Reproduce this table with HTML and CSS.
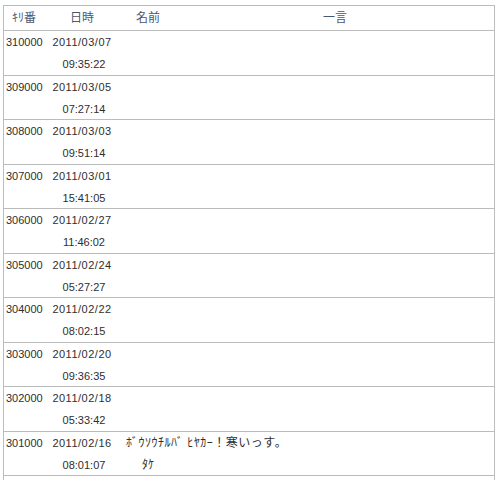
FILE: index.html
```html
<!DOCTYPE html>
<html lang="ja">
<head>
<meta charset="utf-8">
<title>キリ番</title>
<link rel="stylesheet" href="styles.css">
</head>
<body>
<div class="tbl">
  <div class="hd">
    <div class="h">ｷﾘ番</div>
    <div class="h">日時</div>
    <div class="h">名前</div>
    <div class="h">一言</div>
  </div>
  <div class="row"><div class="no">310000</div><div class="date">2011/03/07</div><div class="time">09:35:22</div></div>
  <div class="row"><div class="no">309000</div><div class="date">2011/03/05</div><div class="time">07:27:14</div></div>
  <div class="row"><div class="no">308000</div><div class="date">2011/03/03</div><div class="time">09:51:14</div></div>
  <div class="row"><div class="no">307000</div><div class="date">2011/03/01</div><div class="time">15:41:05</div></div>
  <div class="row"><div class="no">306000</div><div class="date">2011/02/27</div><div class="time">11:46:02</div></div>
  <div class="row"><div class="no">305000</div><div class="date">2011/02/24</div><div class="time">05:27:27</div></div>
  <div class="row"><div class="no">304000</div><div class="date">2011/02/22</div><div class="time">08:02:15</div></div>
  <div class="row"><div class="no">303000</div><div class="date">2011/02/20</div><div class="time">09:36:35</div></div>
  <div class="row"><div class="no">302000</div><div class="date">2011/02/18</div><div class="time">05:33:42</div></div>
  <div class="row"><div class="no">301000</div><div class="date">2011/02/16</div><div class="time">08:01:07</div><div class="cmt">ﾎﾞｳｿｳﾁﾙﾊﾞ ﾋﾔｶｰ！寒いっす。</div><div class="name">ﾀｹ</div></div>
</div>
</body>
</html>
```
FILE: styles.css
```css
html, body {
  margin: 0;
  padding: 0;
  background: #ffffff;
}
body {
  font-family: "Liberation Sans", "Noto Sans CJK JP", sans-serif;
  font-size: 11px;
  color: #2e2e2e;
}
.tbl {
  margin: 5px 0 0 3px;
  width: 492px;
  box-sizing: border-box;
  border: 1px solid #bcbcbc;
  border-bottom: none;
  padding-bottom: 12px;
}
.hd, .row {
  display: grid;
  grid-template-columns: 40px 76px 56px 1fr;
  border-bottom: 1px solid #bcbcbc;
}
.hd {
  height: 24px;
  align-items: center;
}
.h {
  text-align: center;
  font-size: 12px;
  color: #4b5670;
  line-height: 24px;
}
.row {
  height: 43.5px;
  grid-template-rows: 22px 22px;
  line-height: 22px;
}
.no {
  grid-column: 1;
  grid-row: 1;
  padding-left: 2px;
}
.date {
  grid-column: 2;
  grid-row: 1;
  text-align: center;
  letter-spacing: 0.5px;
}
.time {
  grid-column: 2;
  grid-row: 2;
  text-align: center;
  padding-left: 4px;
}
.cmt {
  grid-column: 3 / 5;
  grid-row: 1;
  padding-left: 6px;
  font-size: 12px;
  letter-spacing: 0.5px;
}
.name {
  grid-column: 3;
  grid-row: 2;
  text-align: center;
  font-size: 12px;
}
```
